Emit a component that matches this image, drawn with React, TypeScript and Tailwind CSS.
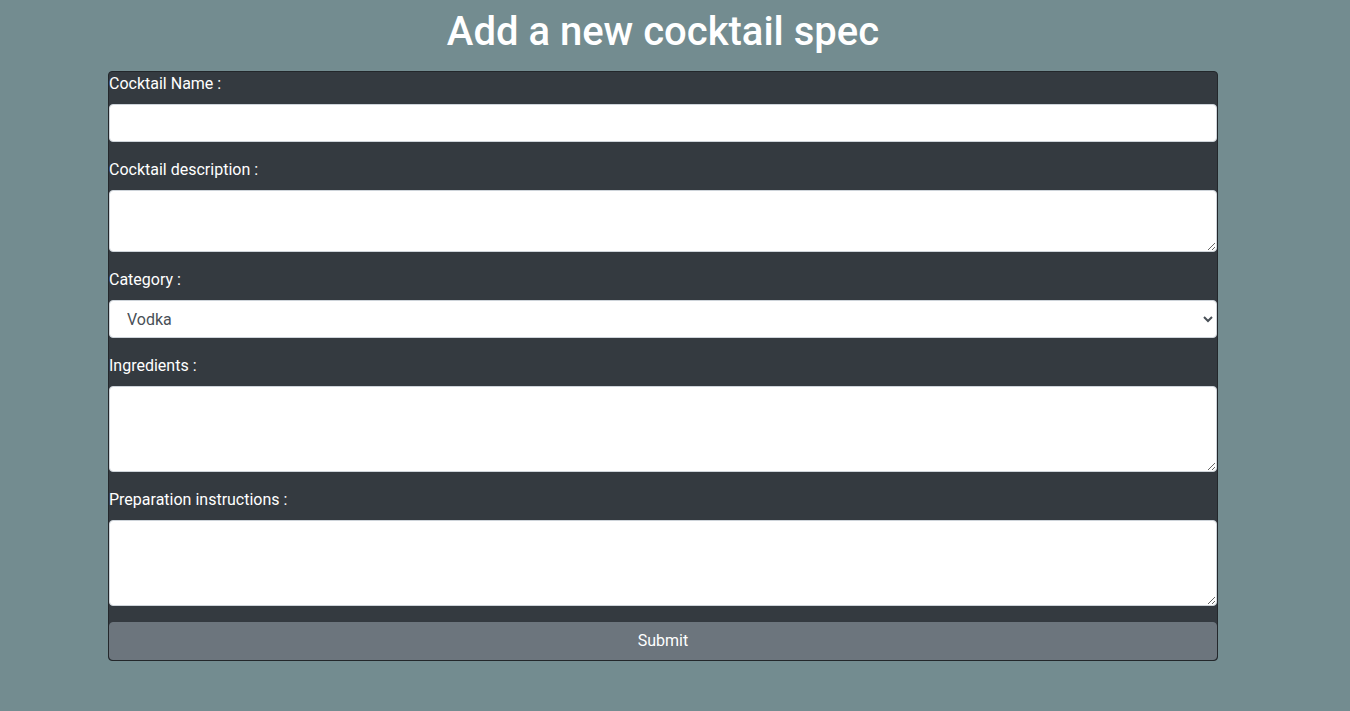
const labelCls = "block text-[16px] leading-[24px] text-white mb-2";
const fieldCls =
    "block w-full rounded-[4px] border border-[#ced4da] bg-white px-3 py-[6px] text-[16px] leading-[24px] text-[#495057] outline-none";

const Field = (props: { label: string, children: React.ReactNode }) => {
    const { label, children } = props;
    return (
        <div className="mb-4">
            <label className={labelCls}>{label}</label>
            {children}
        </div>
    );
};

export default function App() {
    return (
        <div
            className="min-h-[711px] w-full bg-[#738c90] pt-[8px]"
            style={{ fontFamily: "Roboto, 'Liberation Sans', sans-serif" }}
        >
            <div className="ml-[108px] w-[1110px]">
                <h1 className="mb-[15px] text-center text-[40px] font-medium leading-[48px] text-white">
                    Add a new cocktail spec
                </h1>
                <form className="rounded-[4px] border border-[#23272b] bg-[#343a40]">
                    <Field label="Cocktail Name :">
                        <input type="text" className={`${fieldCls} h-[38px]`} />
                    </Field>
                    <Field label="Cocktail description :">
                        <textarea rows={2} className={`${fieldCls} h-[62px]`} />
                    </Field>
                    <Field label="Category :">
                        <select className={`${fieldCls} h-[38px] pl-[13px]`} defaultValue="Vodka">
                            <option>Vodka</option>
                            <option>Gin</option>
                            <option>Rum</option>
                            <option>Tequila</option>
                            <option>Whisky</option>
                        </select>
                    </Field>
                    <Field label="Ingredients :">
                        <textarea rows={3} className={`${fieldCls} h-[86px]`} />
                    </Field>
                    <Field label="Preparation instructions :">
                        <textarea rows={3} className={`${fieldCls} h-[86px]`} />
                    </Field>
                    <button
                        type="button"
                        className="block h-[38px] w-full rounded-[4px] border border-[#6c757d] bg-[#6c757d] text-[16px] leading-[24px] text-white"
                    >
                        Submit
                    </button>
                </form>
            </div>
        </div>
    );
}
